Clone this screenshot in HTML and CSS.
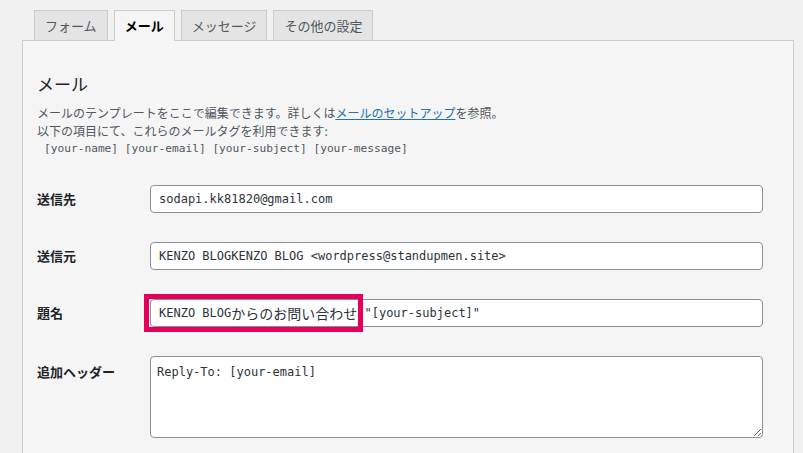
FILE: index.html
```html
<!DOCTYPE html>
<html lang="ja">
<head>
<meta charset="utf-8">
<title>メール</title>
<link rel="stylesheet" href="styles.css">
</head>
<body>
<div class="page">
  <ul class="tabs">
    <li class="tab">フォーム</li>
    <li class="tab active">メール</li>
    <li class="tab">メッセージ</li>
    <li class="tab">その他の設定</li>
  </ul>
  <div class="panel">
    <h2 class="title">メール</h2>
    <p class="desc">メールのテンプレートをここで編集できます。詳しくは<a href="#" class="link">メールのセットアップ</a>を参照。<br>以下の項目にて、これらのメールタグを利用できます:</p>
    <p class="tags">[your-name] [your-email] [your-subject] [your-message]</p>
    <div class="form">
      <label class="label">送信先</label>
      <input class="field" type="text" value="sodapi.kk81820@gmail.com">
      <label class="label">送信元</label>
      <input class="field" type="text" value="KENZO BLOGKENZO BLOG &lt;wordpress@standupmen.site&gt;">
      <label class="label">題名</label>
      <div class="field subject">
        <span class="mono">KENZO BLOG</span><span class="jp">からのお問い合わせ</span><span class="mono">&nbsp;"[your-subject]"</span>
        <span class="highlight"></span>
      </div>
      <label class="label label-top">追加ヘッダー</label>
      <textarea class="area">Reply-To: [your-email]</textarea>
    </div>
  </div>
</div>
</body>
</html>
```
FILE: styles.css
```css
html, body {
  margin: 0;
  background: #f1f1f1;
  font-family: "Noto Sans CJK JP", "Noto Sans", sans-serif;
  color: #1d2327;
}
.page {
  padding: 10px 0 0 22px;
}
.tabs {
  display: flex;
  align-items: flex-start;
  gap: 6px;
  list-style: none;
  margin: 0;
  padding: 0 0 0 12px;
  height: 30px;
}
.tab {
  box-sizing: border-box;
  height: 30px;
  padding: 0 10px;
  border: 1px solid #ccc;
  border-bottom: none;
  background: #e4e4e4;
  font-size: 13px;
  line-height: 30px;
  color: #50575e;
}
.tab.active {
  height: 31px;
  background: #f5f5f5;
  color: #000;
  font-weight: 700;
  position: relative;
  z-index: 1;
}
.panel {
  box-sizing: border-box;
  width: 772px;
  border: 1px solid #ccc;
  background: #f5f5f5;
  padding: 32px 14px 60px;
}
.title {
  margin: 0;
  font-size: 17px;
  line-height: 22px;
  font-weight: 400;
  color: #1d2327;
}
.desc {
  margin: 9px 0 0;
  font-size: 12px;
  line-height: 18px;
  color: #50575e;
}
.link {
  color: #2271b1;
  text-decoration: underline;
}
.tags {
  margin: 0;
  padding-left: 7px;
  font-family: "DejaVu Sans Mono", monospace;
  font-size: 11.2px;
  line-height: 18px;
  color: #50575e;
}
.form {
  margin-top: 27px;
  display: grid;
  grid-template-columns: 113px 613px;
  row-gap: 29px;
  align-items: center;
}
.label {
  font-size: 13px;
  font-weight: 600;
  line-height: 18px;
  color: #1d2327;
}
.label-top {
  align-self: start;
  padding-top: 7px;
}
.field {
  box-sizing: border-box;
  width: 613px;
  height: 28px;
  margin: 0;
  padding: 0 8px;
  border: 1px solid #8c8f94;
  border-radius: 4px;
  background: #fff;
  font-family: "DejaVu Sans Mono", monospace;
  font-size: 12px;
  color: #2c3338;
  outline: none;
}
.subject {
  display: flex;
  align-items: center;
  position: relative;
  white-space: pre;
}
.jp {
  font-family: "Noto Sans CJK JP", sans-serif;
  font-size: 14px;
}
.highlight {
  position: absolute;
  left: -7px;
  top: -6px;
  width: 219px;
  height: 38px;
  box-sizing: border-box;
  border: 5px solid #e4005a;
}
.area {
  box-sizing: border-box;
  width: 613px;
  height: 82px;
  margin: 0;
  padding: 6px 6px;
  border: 1px solid #8c8f94;
  border-radius: 4px;
  background: #fff;
  font-family: "DejaVu Sans Mono", monospace;
  font-size: 12px;
  line-height: 18px;
  color: #2c3338;
  resize: vertical;
  outline: none;
  display: block;
}
```
